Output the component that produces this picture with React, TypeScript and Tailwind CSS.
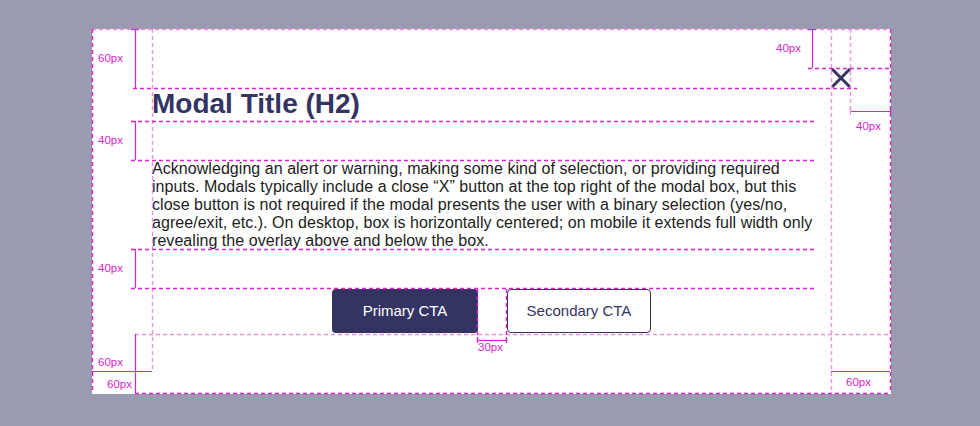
const STRONG = "#dc22cc";
const LIGHT = "#ee8fe4";

type Seg = { x1: number; y1: number; x2: number; y2: number; c: string; dash?: boolean };

// spec annotation lines, page coordinates
const lines: Seg[] = [
  // outer box
  { x1: 92, y1: 29, x2: 891, y2: 29, c: LIGHT, dash: true },
  { x1: 92, y1: 29, x2: 92, y2: 393, c: STRONG, dash: true },
  { x1: 890, y1: 29, x2: 890, y2: 393, c: STRONG, dash: true },
  { x1: 135, y1: 393, x2: 891, y2: 393, c: STRONG, dash: true },
  // content guides
  { x1: 152, y1: 29, x2: 152, y2: 371, c: LIGHT, dash: true },
  { x1: 831, y1: 29, x2: 831, y2: 393, c: LIGHT, dash: true },
  { x1: 850, y1: 29, x2: 850, y2: 111, c: LIGHT, dash: true },
  { x1: 808, y1: 68, x2: 891, y2: 68, c: STRONG, dash: true },
  { x1: 133, y1: 88, x2: 857, y2: 88, c: STRONG, dash: true },
  { x1: 131, y1: 121, x2: 815, y2: 121, c: STRONG, dash: true },
  { x1: 131, y1: 160, x2: 815, y2: 160, c: STRONG, dash: true },
  { x1: 131, y1: 249, x2: 815, y2: 249, c: STRONG, dash: true },
  { x1: 131, y1: 288, x2: 815, y2: 288, c: STRONG, dash: true },
  { x1: 135, y1: 334, x2: 891, y2: 334, c: LIGHT, dash: true },
  { x1: 477, y1: 289, x2: 477, y2: 340, c: STRONG, dash: true },
  { x1: 506, y1: 289, x2: 506, y2: 340, c: STRONG, dash: true },
  // brackets
  { x1: 135, y1: 29, x2: 135, y2: 88, c: STRONG },
  { x1: 131, y1: 29, x2: 139, y2: 29, c: STRONG },
  { x1: 135, y1: 121, x2: 135, y2: 160, c: STRONG },
  { x1: 135, y1: 249, x2: 135, y2: 288, c: STRONG },
  { x1: 135, y1: 334, x2: 135, y2: 393, c: STRONG },
  { x1: 92, y1: 371, x2: 152, y2: 371, c: STRONG },
  { x1: 812, y1: 29, x2: 812, y2: 68, c: STRONG },
  { x1: 808, y1: 29, x2: 816, y2: 29, c: STRONG },
  { x1: 850, y1: 111, x2: 890, y2: 111, c: STRONG },
  { x1: 850, y1: 107, x2: 850, y2: 115, c: LIGHT },
  { x1: 890, y1: 107, x2: 890, y2: 115, c: STRONG },
  { x1: 831, y1: 371, x2: 890, y2: 371, c: STRONG },
  { x1: 477, y1: 340, x2: 506, y2: 340, c: STRONG },
  { x1: 477, y1: 337, x2: 477, y2: 343, c: STRONG },
  { x1: 506, y1: 337, x2: 506, y2: 343, c: STRONG },
];

const labels = [
  { text: "60px", left: 98, top: 52 },
  { text: "40px", left: 98, top: 134 },
  { text: "40px", left: 98, top: 262 },
  { text: "60px", left: 98, top: 356 },
  { text: "60px", left: 107, top: 378 },
  { text: "40px", left: 776, top: 42 },
  { text: "40px", left: 856, top: 120 },
  { text: "30px", left: 478, top: 341 },
  { text: "60px", left: 846, top: 376 },
];

function SpecOverlay() {
  return (
    <div className="pointer-events-none absolute inset-0">
      <svg width="980" height="426" className="absolute left-0 top-0">
        {lines.map((l, i) => (
          <line
            key={i}
            x1={l.x1 === l.x2 ? l.x1 + 0.5 : l.x1}
            x2={l.x1 === l.x2 ? l.x2 + 0.5 : l.x2}
            y1={l.y1 === l.y2 ? l.y1 + 0.5 : l.y1}
            y2={l.y1 === l.y2 ? l.y2 + 0.5 : l.y2}
            stroke={l.c}
            strokeWidth={l.dash ? 1.4 : 1.2}
            strokeDasharray={l.dash ? "4 3" : undefined}
          />
        ))}
      </svg>
      {labels.map((l, i) => (
        <span
          key={i}
          className="absolute text-[11.5px] leading-[13px] text-[#dc22cc]"
          style={{ left: l.left, top: l.top }}
        >
          {l.text}
        </span>
      ))}
    </div>
  );
}

function CloseIcon() {
  return (
    <svg width="20" height="20" viewBox="0 0 20 20" fill="none">
      <path d="M1 1L19 19M19 1L1 19" stroke="#343463" strokeWidth="3" />
    </svg>
  );
}

export default function App() {
  return (
    <div className="relative h-[426px] w-[980px] overflow-hidden bg-[#9a9ab0] pl-[92px] pt-[29px] font-['Liberation_Sans',Arial,sans-serif]">
      <div className="relative h-[365px] w-[799px] bg-white pl-[60px] pr-[60px] pt-[59px]">
        <button
          type="button"
          aria-label="Close"
          className="absolute right-[40px] top-[39px] h-5 w-5"
        >
          <CloseIcon />
        </button>

        <h2 className="h-[32px] text-[28px] font-bold leading-[32px] text-[#343463]">
          Modal Title (H2)
        </h2>

        <p className="mr-[11px] mt-[40px] h-[90px] text-[16px] leading-[18px] tracking-[0.05px] text-[#1c1c1c]">
          Acknowledging an alert or warning, making some kind of selection, or providing required
          inputs. Modals typically include a close “X” button at the top right of the modal box, but
          this close button is not required if the modal presents the user with a binary selection
          (yes/no, agree/exit, etc.). On desktop, box is horizontally centered; on mobile it extends
          full width only revealing the overlay above and below the box.
        </p>

        <div className="mt-[39px] flex justify-center gap-[29px]">
          <button
            type="button"
            className="h-[44px] w-[146px] rounded-[4px] bg-[#343463] text-[15px] text-white"
          >
            Primary CTA
          </button>
          <button
            type="button"
            className="h-[44px] w-[144px] rounded-[4px] border border-[#343463] bg-white text-[15px] text-[#343463]"
          >
            Secondary CTA
          </button>
        </div>
      </div>
      <SpecOverlay />
    </div>
  );
}
